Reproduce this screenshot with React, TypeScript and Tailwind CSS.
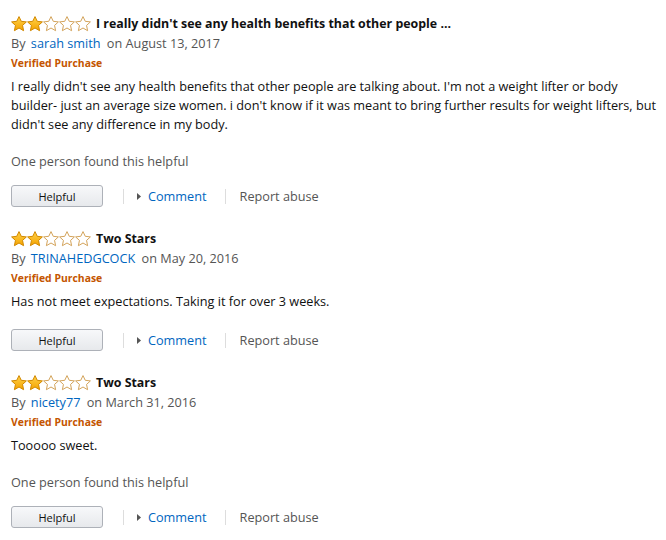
import React from "react";

const Star = ({ filled }: { filled: boolean }) => (
  <svg width="16" height="16" viewBox="0 0 16 16" className="block">
    <defs>
      <linearGradient id="gold" x1="0" y1="0" x2="0" y2="1">
        <stop offset="0" stopColor="#ffd24a" />
        <stop offset="1" stopColor="#f4a300" />
      </linearGradient>
    </defs>
    <path
      d="M8 0.6 L10.25 5.3 L15.4 5.9 L11.55 9.4 L12.6 14.7 L8 12 L3.4 14.7 L4.45 9.4 L0.6 5.9 L5.75 5.3 Z"
      fill={filled ? "url(#gold)" : "#ffffff"}
      stroke={filled ? "#d18800" : "#d3a35a"}
      strokeWidth="1"
      strokeLinejoin="round"
    />
  </svg>
);

const Stars = ({ n }: { n: number }) => (
  <div className="flex">
    {[0, 1, 2, 3, 4].map((i) => (
      <Star key={i} filled={i < n} />
    ))}
  </div>
);

type Review = {
  title: string;
  author: string;
  date: string;
  body: string[];
  helpful: boolean;
};

const reviews: Review[] = [
  {
    title: "I really didn't see any health benefits that other people ...",
    author: "sarah smith",
    date: "August 13, 2017",
    body: [
      "I really didn't see any health benefits that other people are talking about. I'm not a weight lifter or body",
      "builder- just an average size women. i don't know if it was meant to bring further results for weight lifters, but",
      "didn't see any difference in my body.",
    ],
    helpful: true,
  },
  {
    title: "Two Stars",
    author: "TRINAHEDGCOCK",
    date: "May 20, 2016",
    body: ["Has not meet expectations. Taking it for over 3 weeks."],
    helpful: false,
  },
  {
    title: "Two Stars",
    author: "nicety77",
    date: "March 31, 2016",
    body: ["Tooooo sweet."],
    helpful: true,
  },
];

const ReviewItem = ({ r, first }: { r: Review; first: boolean }) => (
  <div className={first ? "" : "mt-[21px]"}>
    <div className="flex h-5 items-center pt-px">
      <Stars n={2} />
      <span className="ml-[5px] text-[12.4px] font-bold leading-5 text-[#111]">{r.title}</span>
    </div>
    <div className="h-5 text-[12.7px] leading-5 text-[#555]">
      By <span className="ml-[2px] mr-[3px] text-[#0066c0]">{r.author}</span> on {r.date}
    </div>
    <div className="h-5 text-[10.4px] font-bold leading-5 text-[#c45500]">Verified Purchase</div>
    <div className="mt-1 text-[12.7px] leading-[19px] text-[#111]">
      {r.body.map((l, i) => (
        <div key={i} className="whitespace-nowrap">{l}</div>
      ))}
    </div>
    {r.helpful && (
      <div className="mt-[18px] text-[12.7px] leading-[19px] text-[#555]">One person found this helpful</div>
    )}
    <div className={`flex items-center ${r.helpful ? "mt-[14px]" : "mt-[18px]"}`}>
      <div className="flex h-[22px] w-[92px] items-center justify-center rounded-[3px] border border-[#adb1b8] bg-gradient-to-b from-[#f7f8fa] to-[#e7e9ec] text-[11px] leading-none text-[#111]">
        Helpful
      </div>
      <div className="ml-[20px] h-[15px] w-px bg-[#ddd]" />
      <div className="ml-[13px] flex items-center">
        <svg width="4" height="7" viewBox="0 0 4 7" className="block">
          <path d="M0 0 L4 3.5 L0 7 Z" fill="#555" />
        </svg>
        <span className="ml-[7px] text-[12.7px] leading-5 text-[#0066c0]">Comment</span>
      </div>
      <div className="ml-[18px] h-[15px] w-px bg-[#ddd]" />
      <span className="ml-[14px] text-[12.7px] leading-5 text-[#555]">Report abuse</span>
    </div>
  </div>
);

export default function App() {
  return (
    <div
      className="h-[540px] w-[666px] overflow-hidden bg-white pl-[11px] pt-[13px]"
      style={{ fontFamily: '"Open Sans", "Noto Sans", Arial, sans-serif' }}
    >
      {reviews.map((r, i) => (
        <ReviewItem key={i} r={r} first={i === 0} />
      ))}
    </div>
  );
}
